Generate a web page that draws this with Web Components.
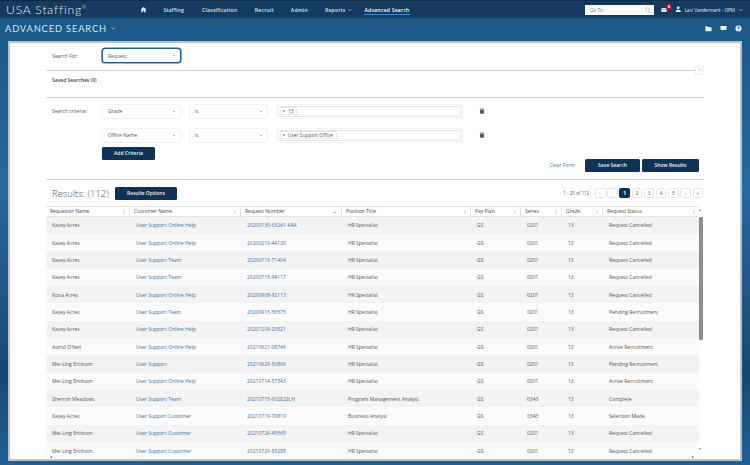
<!DOCTYPE html>
<html>
<head>
<meta charset="utf-8">
<title>Advanced Search</title>
<style>
html, body { margin: 0; padding: 0; height: 465px; overflow: hidden; background: #1d5a88; }
body { font-family: "Open Sans", sans-serif; }
</style>
</head>
<body>
<app-shell></app-shell>
<script>
const ICONS = {
    home: '<path d="M8 2 1 8h2v6h4v-4h2v4h4V8h2z"/>',
    mail: '<path d="M1 3h14v10H1z"/><path d="M1 4l7 5 7-5" fill="none" stroke="#10395c" stroke-width="1.4"/>',
    user: '<circle cx="8" cy="4.5" r="3.5"/><path d="M1.5 15c0-4 2.5-6 6.5-6s6.500 2 6.500 6z"/>',
    folder: '<path d="M1 3h5l1.500 2H15v9H1z"/>',
    comment: '<path d="M1 2h14v9H9l-3 3.500V11H1z"/>',
    help: '<path fill-rule="evenodd" d="M8 1a7 7 0 1 0 0 14A7 7 0 0 0 8 1zm-.9 10h1.800v1.800H7.100zM8 3.500c1.800 0 3 1 3 2.500 0 1.200-.7 1.800-1.400 2.300-.5.400-.7.600-.7 1.200H7.100c0-1.200.5-1.800 1.200-2.300.5-.4.9-.7.9-1.200S8.700 5.200 8 5.200 6.800 5.700 6.800 6.400H5c0-1.700 1.300-2.900 3-2.900z"/>',
    trash: '<path d="M6 1h4v1h4v2H2V2h4zM3 5h10v10H3z"/>',
    chev: '<path d="M2 5l6 6 6-6" fill="none" stroke="currentColor" stroke-width="2.500"/>'
};

class UiIcon extends HTMLElement {
    connectedCallback() {
        const size = this.getAttribute('size') || 7;
        this.attachShadow({ mode: 'open' }).innerHTML = `
        <style>:host { display: inline-flex; } svg { fill: currentColor; display: block; }</style>
        <svg width="${size}" height="${size}" viewBox="0 0 16 16">${ICONS[this.getAttribute('name')]}</svg>`;
    }
}
customElements.define('ui-icon', UiIcon);

class TopNav extends HTMLElement {
    connectedCallback() {
        this.attachShadow({ mode: 'open' }).innerHTML = `
        <style>
            :host { display: flex; align-items: center; height: 18px; background: #123b5f; color: #fff; border-top: 1px solid #0c2a45; box-sizing: border-box; }
            .logo { font: 300 12.200px Lato, sans-serif; letter-spacing: .8px; margin-left: 6px; width: 134px; color: #e6eef5; white-space: nowrap; }
            .logo sup { font-size: 5px; line-height: 0; vertical-align: 5px; letter-spacing: 0; }
            nav { display: flex; align-items: center; font-size: 5.100px; font-weight: 600; color: #dfe8f0; letter-spacing: .2px; white-space: nowrap; }
            nav span { display: flex; align-items: center; }
            .active { color: #fff; border-bottom: 1px solid #2f8fd0; padding-bottom: 1px; margin-top: 2px; }
            .go { display: flex; justify-content: space-between; align-items: center; box-sizing: border-box; width: 69px; height: 10px; background: #fff; color: #777; font-size: 4.600px; padding: 0 3px 0 5px; margin-left: auto; }
            .mail { position: relative; margin-left: 7px; color: #fff; display: flex; }
            .badge { position: absolute; top: -3px; left: 5px; width: 6px; height: 6px; border-radius: 50%; background: #c8102e; color: #fff; font-size: 4px; font-weight: 700; line-height: 6px; text-align: center; }
            .who { display: flex; align-items: center; color: #e6eef5; font-size: 4.600px; margin-left: 8px; margin-right: 7px; white-space: nowrap; }
        </style>
        <div class="logo">USA Staffing<sup>®</sup></div>
        <nav>
            <ui-icon name="home" size="7" style="margin-right:16.500px"></ui-icon>
            <span style="margin-right:18px">Staffing</span>
            <span style="margin-right:17.500px">Classification</span>
            <span style="margin-right:17px">Recruit</span>
            <span style="margin-right:17px">Admin</span>
            <span style="margin-right:12px">Reports<ui-icon name="chev" size="4" style="margin-left:3px"></ui-icon></span>
            <span class="active">Advanced Search</span>
        </nav>
        <div class="go"><span>Go To</span><svg width="6" height="6" viewBox="0 0 16 16" fill="none" stroke="#bbb" stroke-width="2"><circle cx="7" cy="7" r="5"/><path d="M11 11l4 4"/></svg></div>
        <div class="mail"><ui-icon name="mail" size="6"></ui-icon><div class="badge">6</div></div>
        <div class="who"><ui-icon name="user" size="6.500" style="margin-right:3px"></ui-icon>Laci Vandermark - OPM<ui-icon name="chev" size="4" style="margin-left:4px"></ui-icon></div>`;
    }
}
customElements.define('top-nav', TopNav);

class SubBar extends HTMLElement {
    connectedCallback() {
        this.attachShadow({ mode: 'open' }).innerHTML = `
        <style>
            :host { display: flex; align-items: center; height: 23px; box-sizing: border-box; padding: 0 8px 2px 5px; color: #dbe6ef; }
            .title { display: flex; align-items: center; font: 400 9.300px Lato, sans-serif; letter-spacing: .85px; white-space: nowrap; }
            .icons { margin-left: auto; display: flex; gap: 8px; color: #eef3f7; }
        </style>
        <div class="title">ADVANCED SEARCH<ui-icon name="chev" size="4.500" style="margin-left:4px"></ui-icon></div>
        <div class="icons"><ui-icon name="folder"></ui-icon><ui-icon name="comment"></ui-icon><ui-icon name="help"></ui-icon></div>`;
    }
}
customElements.define('sub-bar', SubBar);

class PickBox extends HTMLElement {
    connectedCallback() {
        const focus = this.hasAttribute('focus');
        this.attachShadow({ mode: 'open' }).innerHTML = `
        <style>
            :host { display: flex; align-items: center; justify-content: space-between; box-sizing: border-box; width: 78.500px; height: 15px; padding: 0 5px; font-size: 5px; color: #555;
                border-radius: 3px; background: #fff; border: ${focus ? '1px solid #1d5a9c; box-shadow: 0 0 0 .6px #2a6aa8' : '1px solid #f1f1f1'}; }
            i { width: 0; height: 0; border-left: 1.200px solid transparent; border-right: 1.200px solid transparent; border-top: 1.600px solid #777; }
        </style>
        <slot></slot><i></i>`;
    }
}
customElements.define('pick-box', PickBox);

class TagBox extends HTMLElement {
    connectedCallback() {
        this.attachShadow({ mode: 'open' }).innerHTML = `
        <style>
            :host { display: block; box-sizing: border-box; width: 187px; height: 15px; padding: 1px; border: 1px solid #f3f3f3; border-radius: 3px; background: #fff; }
            .in { display: flex; align-items: center; height: 100%; box-sizing: border-box; border: 1px solid #e4e4e4; padding-left: 1px; }
            .tag { font-size: 4.900px; color: #555; border: 1px solid #e8e8e8; padding: 0 3px 0 2px; line-height: 6.500px; white-space: nowrap; }
        </style>
        <div class="in"><span class="tag">× &nbsp;<slot></slot></span></div>`;
    }
}
customElements.define('tag-box', TagBox);

class CriteriaRow extends HTMLElement {
    connectedCallback() {
        this.attachShadow({ mode: 'open' }).innerHTML = `
        <style>
            :host { display: flex; align-items: center; height: 15px; font-size: 5px; color: #555; }
            .lab { width: 56px; flex: none; white-space: nowrap; padding-left: 6px; box-sizing: border-box; }
            .trash { margin-left: 16px; color: #555; }
            .a { margin-right: 8.500px; }
            .b { margin-right: 8px; }
        </style>
        <div class="lab">${this.getAttribute('label') || ''}</div>
        <pick-box class="a">${this.getAttribute('field')}</pick-box>
        <pick-box class="b">is</pick-box>
        <tag-box>${this.getAttribute('value')}</tag-box>
        <ui-icon class="trash" name="trash" size="6"></ui-icon>`;
    }
}
customElements.define('criteria-row', CriteriaRow);

class NavyButton extends HTMLElement {
    connectedCallback() {
        this.attachShadow({ mode: 'open' }).innerHTML = `
        <style>
            :host { display: inline-flex; align-items: center; justify-content: center; box-sizing: border-box; height: 12.500px; background: #0e3358; color: #f0f4f8; font-size: 5px; font-weight: 600; border-radius: 1.500px; white-space: nowrap; }
        </style>
        <slot></slot>`;
    }
}
customElements.define('navy-button', NavyButton);

class SearchForm extends HTMLElement {
    connectedCallback() {
        this.attachShadow({ mode: 'open' }).innerHTML = `
        <style>
            :host { display: block; color: #555; font-size: 5px; }
            hr { border: 0; border-top: 1px solid #d2d2d2; margin: 0; }
            .for { display: flex; align-items: center; height: 26.500px; padding: 0 0 1.500px 6px; box-sizing: border-box; }
            .for span { width: 50px; }
            .saved { position: relative; height: 26px; box-sizing: border-box; padding: 6px 0 0 6px; font-weight: 600; color: #444; }
            .toggle { position: absolute; right: 0; top: -5px; display: flex; align-items: center; justify-content: center; width: 9px; height: 9px; box-sizing: border-box; background: #fff; border: 1px solid #eee; border-radius: 1px; color: #aaa; }
            .toggle ui-icon { transform: rotate(180deg); }
            .crit { padding-top: 6px; display: grid; row-gap: 9px; }
            .acts { display: flex; align-items: flex-start; height: 36.500px; padding: 4.500px 0 0 56px; box-sizing: border-box; }
            .right { margin-left: auto; display: flex; align-items: center; margin-top: 12px; margin-right: 5px; }
            .clear { color: #3c7dba; margin-right: 10px; }
        </style>
        <div class="for"><span>Search For:</span><pick-box focus>Request</pick-box></div>
        <hr>
        <div class="saved">Saved Searches (0)<div class="toggle"><ui-icon name="chev" size="4"></ui-icon></div></div>
        <hr>
        <div class="crit">
            <criteria-row label="Search criteria:" field="Grade" value="13"></criteria-row>
            <criteria-row field="Office Name" value="User Support Office"></criteria-row>
        </div>
        <div class="acts">
            <navy-button style="width:53px">Add Criteria</navy-button>
            <div class="right">
                <span class="clear">Clear Form</span>
                <navy-button style="width:55px;margin-right:2px">Save Search</navy-button>
                <navy-button style="width:57px">Show Results</navy-button>
            </div>
        </div>
        <hr>`;
    }
}
customElements.define('search-form', SearchForm);

class ResultsHead extends HTMLElement {
    connectedCallback() {
        const pages = ['«', '‹', '1', '2', '3', '4', '5', '›', '»'];
        this.attachShadow({ mode: 'open' }).innerHTML = `
        <style>
            :host { display: flex; align-items: center; height: 25.500px; box-sizing: border-box; padding: 1px 1px 0 6px; color: #555; }
            .t { width: 57px; flex: none; font-size: 9.500px; font-weight: 300; color: #555; margin-right: 6px; white-space: nowrap; }
            .count { margin-left: auto; font-size: 4.500px; margin-right: 6px; white-space: nowrap; }
            .pg { display: flex; gap: 1.800px; }
            .pg span { width: 10.400px; height: 10px; box-sizing: border-box; border: 1px solid #e6e6e6; border-radius: 1.500px; font-size: 4.800px; line-height: 8px; text-align: center; color: #555; }
            .pg .dim { color: #bbb; }
            .pg .on { background: #0e3358; color: #fff; border-color: #0e3358; font-weight: 700; }
        </style>
        <div class="t">Results: (112)</div>
        <navy-button style="width:62px">Results Options</navy-button>
        <div class="count">1 - 25 of 112</div>
        <div class="pg">${pages.map((p, i) => `<span class="${i == 2 ? 'on' : i < 2 ? 'dim' : ''}">${p}</span>`).join('')}</div>`;
    }
}
customElements.define('results-head', ResultsHead);

const COLS = '84px 111px 101px 129px 50px 41px 41px 96px';
const HEAD = [['Requestor Name','↕'],['Customer Name','↕'],['Request Number','⌄'],['Position Title','↕'],['Pay Plan','↕'],['Series','↕'],['Grade','↕'],['Request Status','↕']];
const OH = 'User Support Online Help', TM = 'User Support Team', CU = 'User Support Customer', HR = 'HR Specialist', RC = 'Request Cancelled', KA = 'Kasey Acres', ME = 'Mei-Ling Erickson';
const ROWS = [
    [KA, OH, '20200130-63241-KAA', HR, '0201', RC],
    [KA, OH, '20200210-44130', HR, '0201', RC],
    [KA, TM, '20200715-71404', HR, '0201', RC],
    [KA, TM, '20200715-94117', HR, '0201', RC],
    ['Kona Acres', OH, '20200908-92113', HR, '0201', RC],
    [KA, TM, '20200915-56575', HR, '0201', 'Pending Recruitment'],
    [KA, OH, '20201209-20821', HR, '0201', RC],
    ["Astrid O'Neil", OH, '20210621-08746', HR, '0201', 'Active Recruitment'],
    [ME, 'User Support', '20210629-50866', HR, '0201', 'Pending Recruitment'],
    [ME, OH, '20210714-57343', HR, '0201', 'Active Recruitment'],
    ['Sherron Meadows', TM, '20210715-60282SLH', 'Program Management Analyst', '0343', 'Complete'],
    [KA, CU, '20210719-70819', 'Business Analyst', '0343', 'Selection Made'],
    [ME, CU, '20210726-45565', HR, '0201', RC],
    [ME, CU, '20210726-89288', HR, '0201', RC]
];

class ResultsTable extends HTMLElement {
    connectedCallback() {
        const head = HEAD.map(h => `<div class="th"><span>${h[0]}</span><b>${h[1]}</b></div>`).join('');
        const rows = ROWS.map(r => `<div class="tr">
            <div>${r[0]}</div><div class="lnk">${r[1]}</div><div class="lnk">${r[2]}</div><div>${r[3]}</div>
            <div>GS</div><div>${r[4]}</div><div>13</div><div>${r[5]}</div></div>`).join('');
        this.attachShadow({ mode: 'open' }).innerHTML = `
        <style>
            :host { display: block; position: relative; height: 253px; overflow: hidden; font-size: 5px; color: #555; }
            .tr, .hd { display: grid; grid-template-columns: ${COLS}; width: 653px; }
            .hd { height: 11px; box-sizing: border-box; border-top: 1px solid #e3e3e3; border-bottom: 1px solid #e3e3e3; }
            .th { display: flex; justify-content: space-between; align-items: center; padding: 0 4px; box-sizing: border-box; border-right: 1px solid #e3e3e3; color: #4a4a4a; }
            .th:last-child { border-right: 0; }
            .th b { font-weight: 400; font-size: 4.500px; }
            .tr { height: 17.350px; align-items: center; background: #fbfbfb; white-space: nowrap; }
            .tr:nth-child(odd) { background: #f3f3f3; }
            .tr > div { padding-left: 6px; }
            .lnk { color: #3f6fa3; }
            .bar { position: absolute; right: 1.500px; top: 0; bottom: 8px; width: 3.500px; background: #fff; }
            .bar .thumb { position: absolute; left: 0; right: 0; top: 11px; height: 123px; background: #8d8d8d; border-radius: 1px; }
            .bar .up, .bar .down { position: absolute; left: .2px; width: 0; height: 0; border-left: 1.500px solid transparent; border-right: 1.500px solid transparent; }
            .bar .up { top: 3px; border-bottom: 2px solid #777; }
            .bar .down { bottom: 1px; border-top: 2px solid #777; }
            .hbar { position: absolute; left: 0; right: 0; bottom: 0; height: 6px; }
            .hbar i { position: absolute; bottom: 1px; width: 0; height: 0; border-top: 1.500px solid transparent; border-bottom: 1.500px solid transparent; }
            .hbar .l { left: 4px; border-right: 2px solid #666; }
            .hbar .r { right: 10px; border-left: 2px solid #666; }
        </style>
        <div class="hd">${head}</div>
        <div class="body">${rows}</div>
        <div class="bar"><div class="up"></div><div class="thumb"></div><div class="down"></div></div>
        <div class="hbar"><i class="l"></i><i class="r"></i></div>`;
    }
}
customElements.define('results-table', ResultsTable);

class AppShell extends HTMLElement {
    connectedCallback() {
        this.attachShadow({ mode: 'open' }).innerHTML = `
        <style>
            :host { display: block; height: 465px; overflow: hidden; background: linear-gradient(180deg, #1c5886 18px, #28689c 190px, #164872 375px, #206090 465px); }
            .panel { margin: 0 8px; height: 420px; box-sizing: border-box; overflow: hidden; background: #fff; border: 2px solid #bcc2c8; padding: 0 36px; }
        </style>
        <top-nav></top-nav>
        <sub-bar></sub-bar>
        <div class="panel">
            <search-form></search-form>
            <results-head></results-head>
            <results-table></results-table>
        </div>`;
    }
}
customElements.define('app-shell', AppShell);
</script>
</body>
</html>
